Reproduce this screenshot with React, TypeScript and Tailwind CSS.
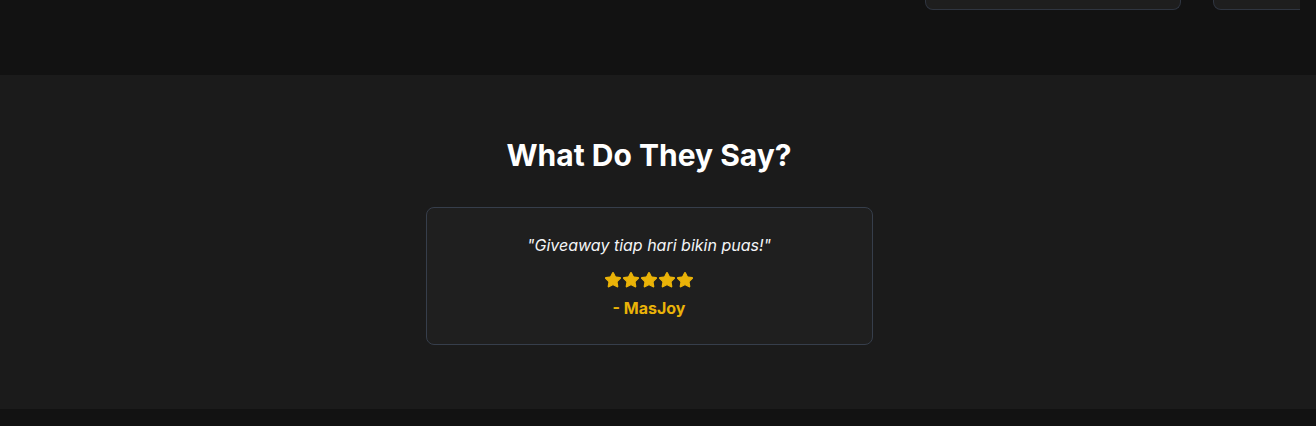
import { Star } from 'lucide-react';

export default function App() {
  return (
    <div className="min-h-[426px] bg-[#121212] font-['Inter',sans-serif]">
      {/* Tail of the previous section */}
      <section className="h-[75px] bg-[#121212]">
        <div className="w-[1300px] overflow-hidden">
          <div className="flex gap-8 pl-[925px]">
            <div className="h-[10px] w-64 shrink-0 rounded-b-lg border border-t-0 border-[#2f3540] bg-[#1e1e1e]" />
            <div className="h-[10px] w-64 shrink-0 rounded-b-lg border border-t-0 border-[#2f3540] bg-[#1e1e1e]" />
          </div>
        </div>
      </section>

      {/* Testimonials */}
      <section className="bg-[#1b1b1b] pt-[62px] pb-16">
        <div className="flex flex-col items-center pr-[18px]">
          <h2 className="text-[30px] leading-9 font-bold text-white">What Do They Say?</h2>
          <div className="mt-[34px] w-[447px] rounded-lg border border-[#363e4b] bg-[#1f1f1f] px-6 pt-[25px] pb-[24px] text-center">
            <p className="text-base leading-6 italic text-gray-100">"Giveaway tiap hari bikin puas!"</p>
            <div className="mt-[14px] flex justify-center text-[#eab308]">
              {[0, 1, 2, 3, 4].map((i) => (
                <Star key={i} className="h-[18px] w-[18px]" fill="currentColor" strokeWidth={1.5} />
              ))}
            </div>
            <p className="mt-[7px] text-base leading-6 font-bold text-[#eab308]">- MasJoy</p>
          </div>
        </div>
      </section>
    </div>
  );
}
